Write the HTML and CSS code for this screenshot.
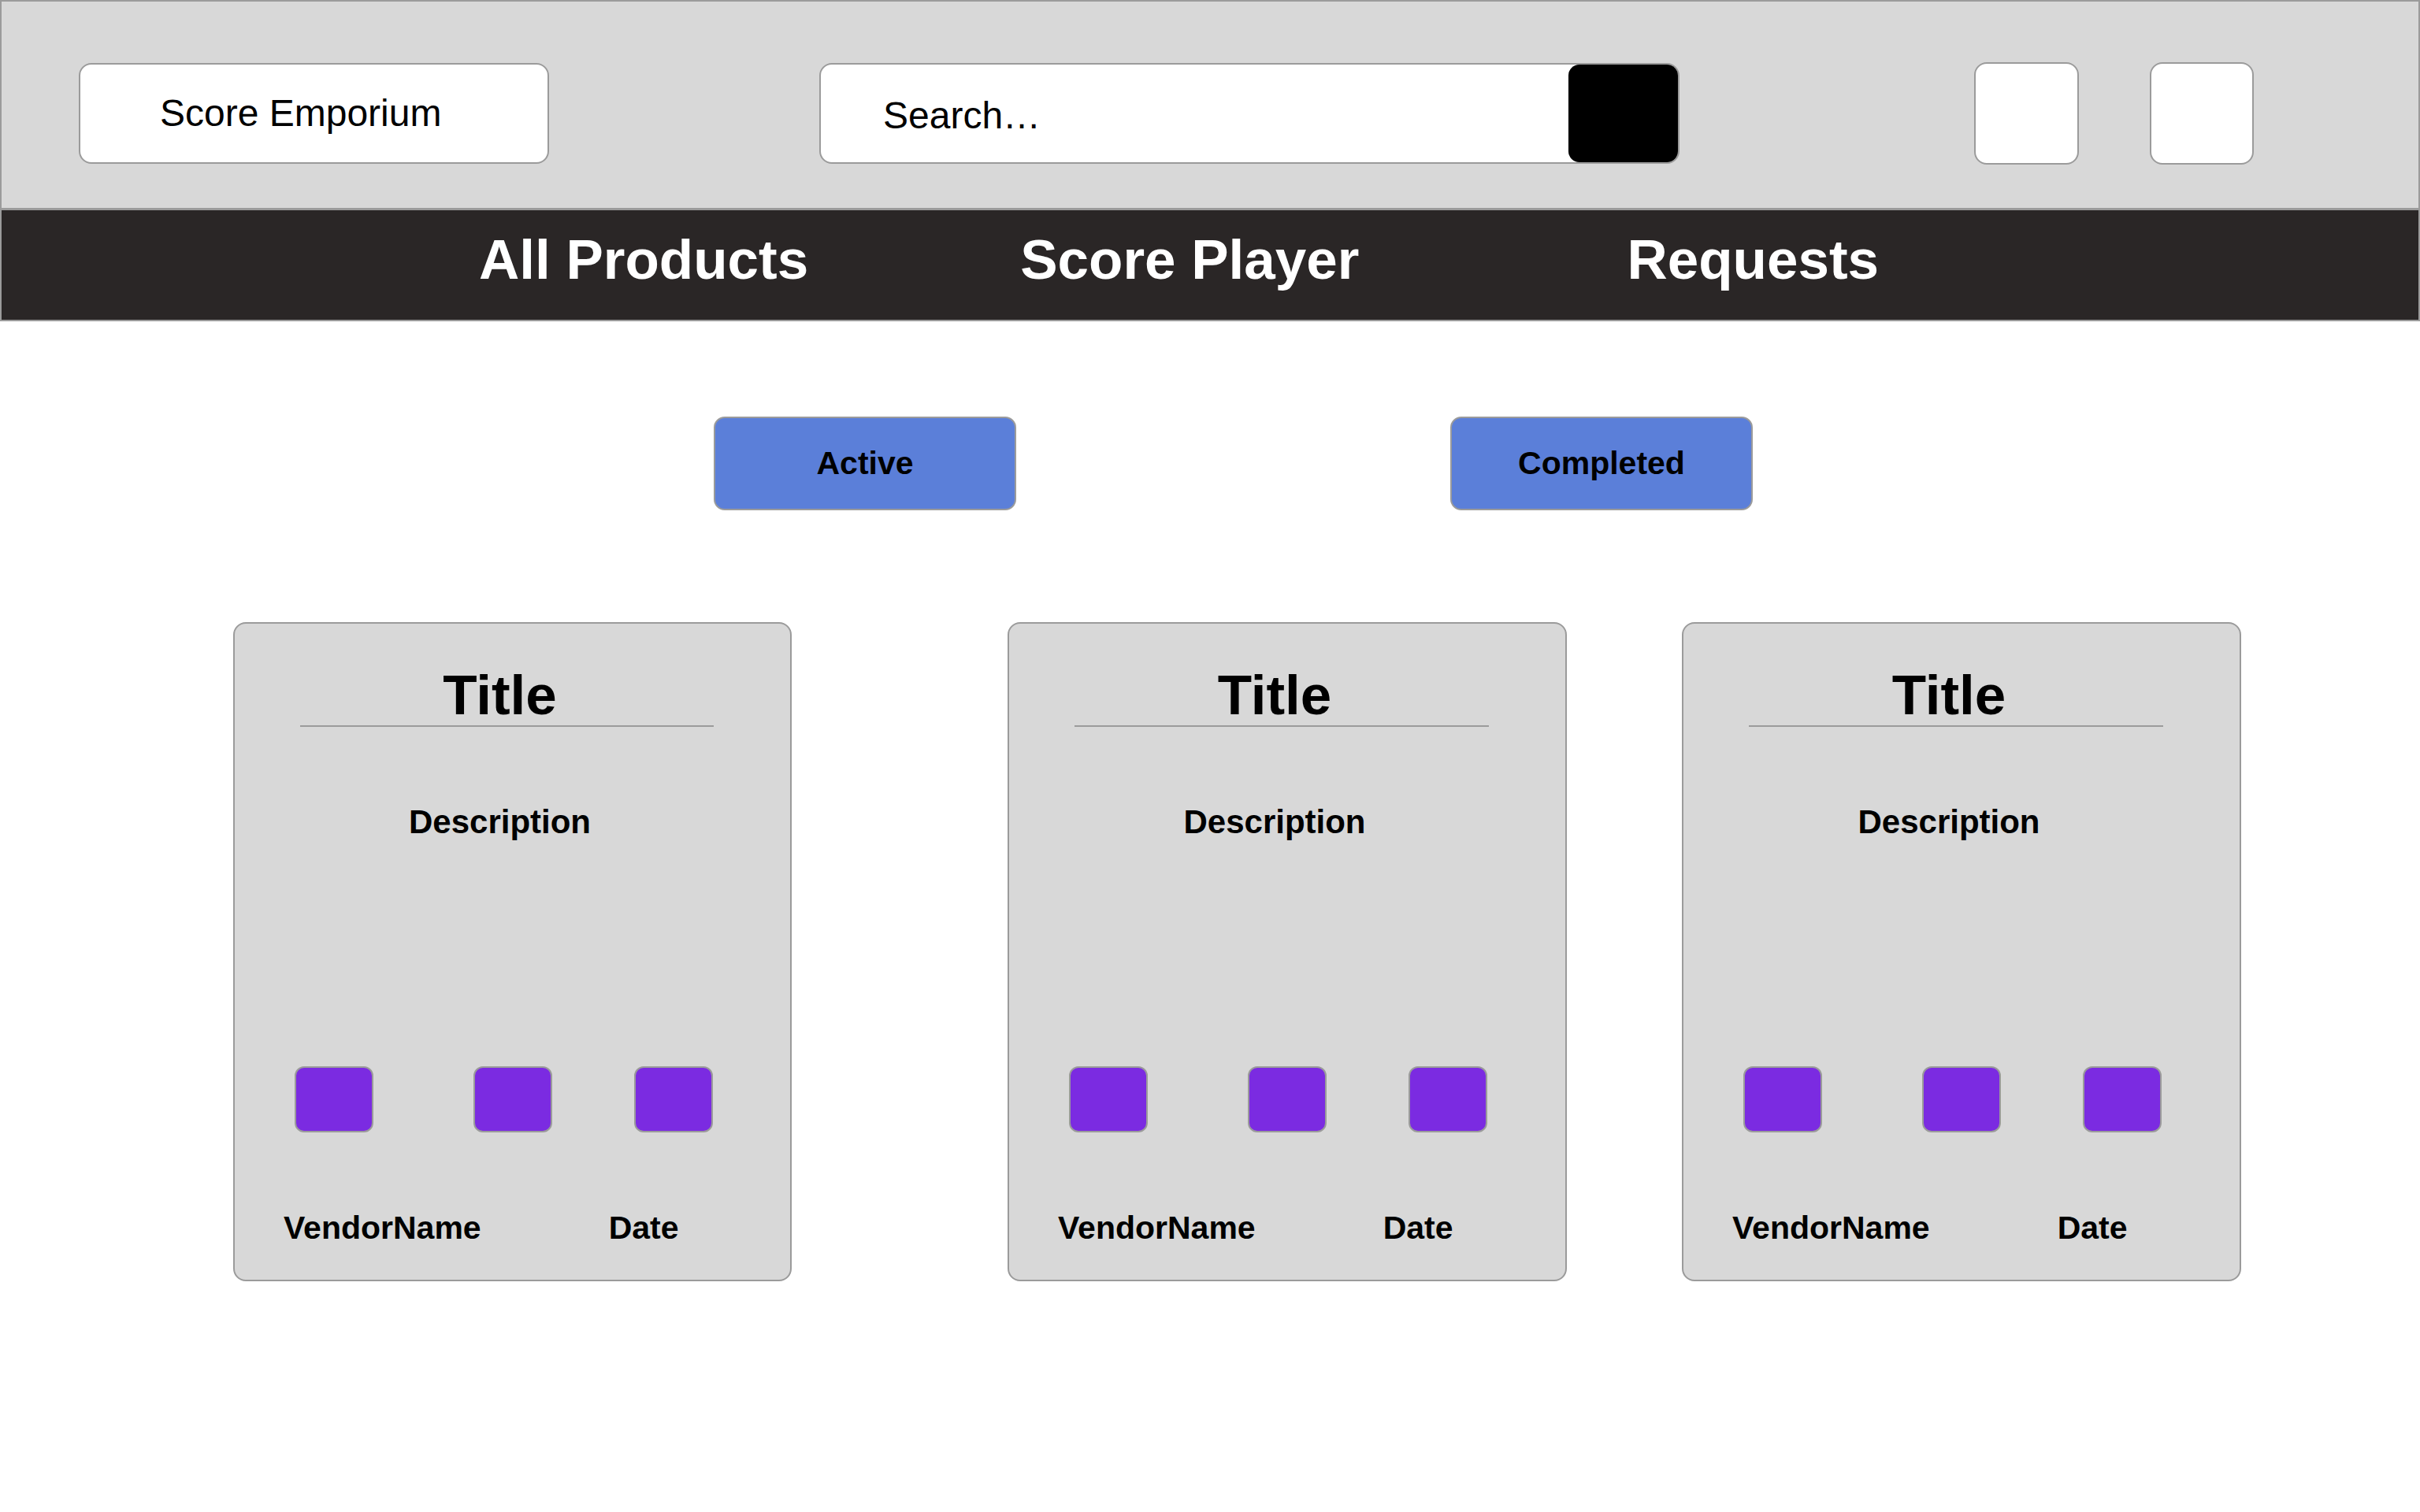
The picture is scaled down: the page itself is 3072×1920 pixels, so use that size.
FILE: index.html
```html
<!DOCTYPE html>
<html lang="en">
<head>
<meta charset="utf-8">
<title>Score Emporium</title>
<link rel="stylesheet" href="styles.css">
</head>
<body>
<header class="topbar">
  <div class="logo-box">Score Emporium</div>
  <div class="search-box">
    <span class="search-text">Search…</span>
    <span class="search-btn"></span>
  </div>
  <div class="icon-box icon-box-1"></div>
  <div class="icon-box icon-box-2"></div>
</header>
<nav class="nav">
  <a class="nav-item nav-item-1">All Products</a>
  <a class="nav-item nav-item-2">Score Player</a>
  <a class="nav-item nav-item-3">Requests</a>
</nav>
<main class="content">
  <div class="tabs">
    <div class="tab tab-active">Active</div>
    <div class="tab tab-completed">Completed</div>
  </div>
  <div class="cards">
    <div class="card card-1">
      <h2 class="card-title">Title</h2>
      <p class="card-desc">Description</p>
      <div class="swatches"><span class="swatch"></span><span class="swatch"></span><span class="swatch"></span></div>
      <div class="card-foot"><span class="vendor">VendorName</span><span class="date">Date</span></div>
    </div>
    <div class="card card-2">
      <h2 class="card-title">Title</h2>
      <p class="card-desc">Description</p>
      <div class="swatches"><span class="swatch"></span><span class="swatch"></span><span class="swatch"></span></div>
      <div class="card-foot"><span class="vendor">VendorName</span><span class="date">Date</span></div>
    </div>
    <div class="card card-3">
      <h2 class="card-title">Title</h2>
      <p class="card-desc">Description</p>
      <div class="swatches"><span class="swatch"></span><span class="swatch"></span><span class="swatch"></span></div>
      <div class="card-foot"><span class="vendor">VendorName</span><span class="date">Date</span></div>
    </div>
  </div>
</main>
</body>
</html>
```

FILE: styles.css
```css
* { box-sizing: border-box; }
html, body {
  margin: 0;
  padding: 0;
  background: #ffffff;
  font-family: "Liberation Sans", Arial, Helvetica, sans-serif;
  color: #000;
}
body { width: 3072px; min-height: 1920px; }

.topbar {
  height: 267px;
  background: #d8d8d8;
  border: 2px solid #9b9b9b;
  border-bottom-width: 3px;
  display: flex;
  align-items: flex-start;
  padding: 78px 0 0 98px;
}
.logo-box {
  width: 597px;
  height: 128px;
  background: #fff;
  border: 2px solid #9b9b9b;
  border-radius: 16px;
  display: flex;
  align-items: center;
  padding-left: 101px;
  font-size: 48px;
  line-height: 1;
}
.search-box {
  margin-left: 343px;
  width: 1092px;
  height: 128px;
  background: #fff;
  border: 2px solid #9b9b9b;
  border-radius: 16px;
  display: flex;
  align-items: stretch;
}
.search-text {
  flex: 1;
  display: flex;
  align-items: center;
  padding: 6px 0 0 79px;
  font-size: 48px;
  line-height: 1;
}
.search-btn {
  width: 139px;
  background: #000;
  border-radius: 14px;
}
.icon-box {
  width: 133px;
  height: 130px;
  background: #fff;
  border: 2px solid #9b9b9b;
  border-radius: 16px;
  margin-top: -1px;
}
.icon-box-1 { margin-left: 374px; }
.icon-box-2 { margin-left: 90px; width: 132px; }

.nav {
  height: 141px;
  background: #2a2626;
  border: 2px solid #9b9b9b;
  border-top: 0;
  display: flex;
  align-items: flex-start;
  padding: 27px 0 0 606px;
}
.nav-item {
  color: #fff;
  font-weight: bold;
  font-size: 71px;
  line-height: 1;
  white-space: nowrap;
}
.nav-item-2 { margin-left: 269px; }
.nav-item-3 { margin-left: 340px; }

.tabs {
  display: flex;
  padding: 121px 0 0 906px;
}
.tab {
  width: 384px;
  height: 119px;
  background: #5b7fd9;
  border: 2px solid #9b9b9b;
  border-radius: 14px;
  display: flex;
  align-items: center;
  justify-content: center;
  font-weight: bold;
  font-size: 41px;
  line-height: 1;
}
.tab-completed { margin-left: 551px; }

.cards {
  display: flex;
  align-items: flex-start;
  padding: 142px 0 0 296px;
}
.card {
  width: 709px;
  height: 837px;
  background: #d8d8d8;
  border: 2px solid #9b9b9b;
  border-radius: 16px;
  padding-top: 55px;
}
.card-2 { margin-left: 274px; width: 710px; }
.card-3 { margin-left: 146px; width: 710px; }

.card-title {
  margin: 0 97px 0 83px;
  padding: 0 18px 3px 0;
  border-bottom: 2px solid #9b9b9b;
  font-size: 71px;
  font-weight: bold;
  line-height: 1;
  text-align: center;
}
.card-desc {
  margin: 100px 115px 0 83px;
  font-size: 42px;
  font-weight: bold;
  line-height: 1;
  text-align: center;
}
.swatches {
  display: flex;
  margin-top: 289px;
  padding-left: 76px;
}
.swatch {
  width: 100px;
  height: 84px;
  background: #7b2be1;
  border: 2px solid #9b9b9b;
  border-radius: 12px;
}
.swatch:nth-child(2) { margin-left: 127px; }
.swatch:nth-child(3) { margin-left: 104px; }

.card-foot {
  display: flex;
  margin-top: 101px;
  padding-left: 62px;
  font-size: 41px;
  font-weight: bold;
  line-height: 1;
}
.date { margin-left: 162px; }
```
